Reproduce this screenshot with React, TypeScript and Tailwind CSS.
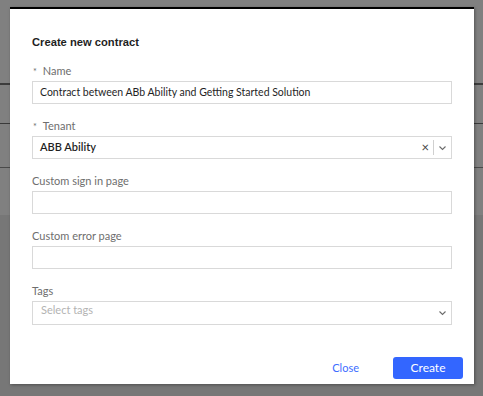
import React from "react";

function Chevron() {
  return (
    <svg width="9" height="6" viewBox="0 0 9 6" fill="none">
      <path d="M1.5 1.5 L4.5 4.5 L7.5 1.5" stroke="#6b6b6b" strokeWidth="1.1" />
    </svg>
  );
}

function Label({ children, req }: { children: React.ReactNode; req?: boolean }) {
  return (
    <div className="h-[16px] leading-[16px] text-[11px] text-[#6e6e6e] mb-[2px]">
      {req && <span className="text-[9px] mr-[6px] ml-[1px]">*</span>}
      {children}
    </div>
  );
}

export default function App() {
  return (
    <div
      className="relative w-[483px] h-[396px] bg-[#808080] overflow-hidden"
      style={{ fontFamily: 'Lato, "Noto Sans", sans-serif' }}
    >
      <div className="h-[83px]" />
      <div className="h-[2px] bg-[#3c3c3c]" />
      <div className="h-[38px]" />
      <div className="h-[1px] bg-[#3a3a3a]" />
      <div className="h-[43px]" />
      <div className="h-[1px] bg-[#4a4a4a]" />
      <div className="h-[47px]" />
      <div className="h-[181px] bg-[#777777]" />

      <div className="absolute left-[10px] top-[7px] w-[464px] h-[377px] bg-white border-t-[2px] border-black shadow-[1px_1px_3px_rgba(0,0,0,0.35)] flex flex-col px-[22px]">
        <div
          className="pt-[23px] h-[43px] leading-[20px] text-[11.2px] font-bold text-[#1f1f1f]"
          style={{ fontFamily: '"Liberation Sans", Arial, sans-serif' }}
        >
          Create new contract
        </div>
        <div className="mt-[11px]">
          <Label req>Name</Label>
          <div className="h-[23px] border border-[#d9d9d9] flex items-center px-[7px] text-[10.5px] text-[#1f1f1f]">
            Contract between ABb Ability and Getting Started Solution
          </div>
        </div>
        <div className="mt-[14px]">
          <Label req>Tenant</Label>
          <div className="h-[23px] border border-[#d9d9d9] flex items-center pl-[7px] text-[11px] font-semibold text-[#1f1f1f]">
            <span className="flex-1">ABB Ability</span>
            <span className="text-[13px] font-normal text-[#444] leading-none mr-[4px]">×</span>
            <span className="w-px h-[15px] bg-[#d0d0d0]" />
            <span className="w-[17px] flex justify-center">
              <Chevron />
            </span>
          </div>
        </div>
        <div className="mt-[14px]">
          <Label>Custom sign in page</Label>
          <div className="h-[23px] border border-[#d9d9d9]" />
        </div>
        <div className="mt-[14px]">
          <Label>Custom error page</Label>
          <div className="h-[23px] border border-[#d9d9d9]" />
        </div>
        <div className="mt-[14px]">
          <Label>Tags</Label>
          <div className="h-[24px] border border-[#d9d9d9] flex items-start pl-[8px] text-[11px] text-[#b3b3b3]">
            <span className="flex-1 leading-[14px] pt-[1px]">Select tags</span>
            <span className="w-[17px] flex justify-center self-center">
              <Chevron />
            </span>
          </div>
        </div>
        <div className="mt-auto mb-[5px] flex justify-end items-center -mr-[11px]">
          <button className="text-[11px] text-[#3d6dff] px-[12px] mr-[22px]">Close</button>
          <button className="w-[70px] h-[22px] rounded-[3px] bg-[#3366ff] text-white text-[12px]">Create</button>
        </div>
      </div>
    </div>
  );
}
